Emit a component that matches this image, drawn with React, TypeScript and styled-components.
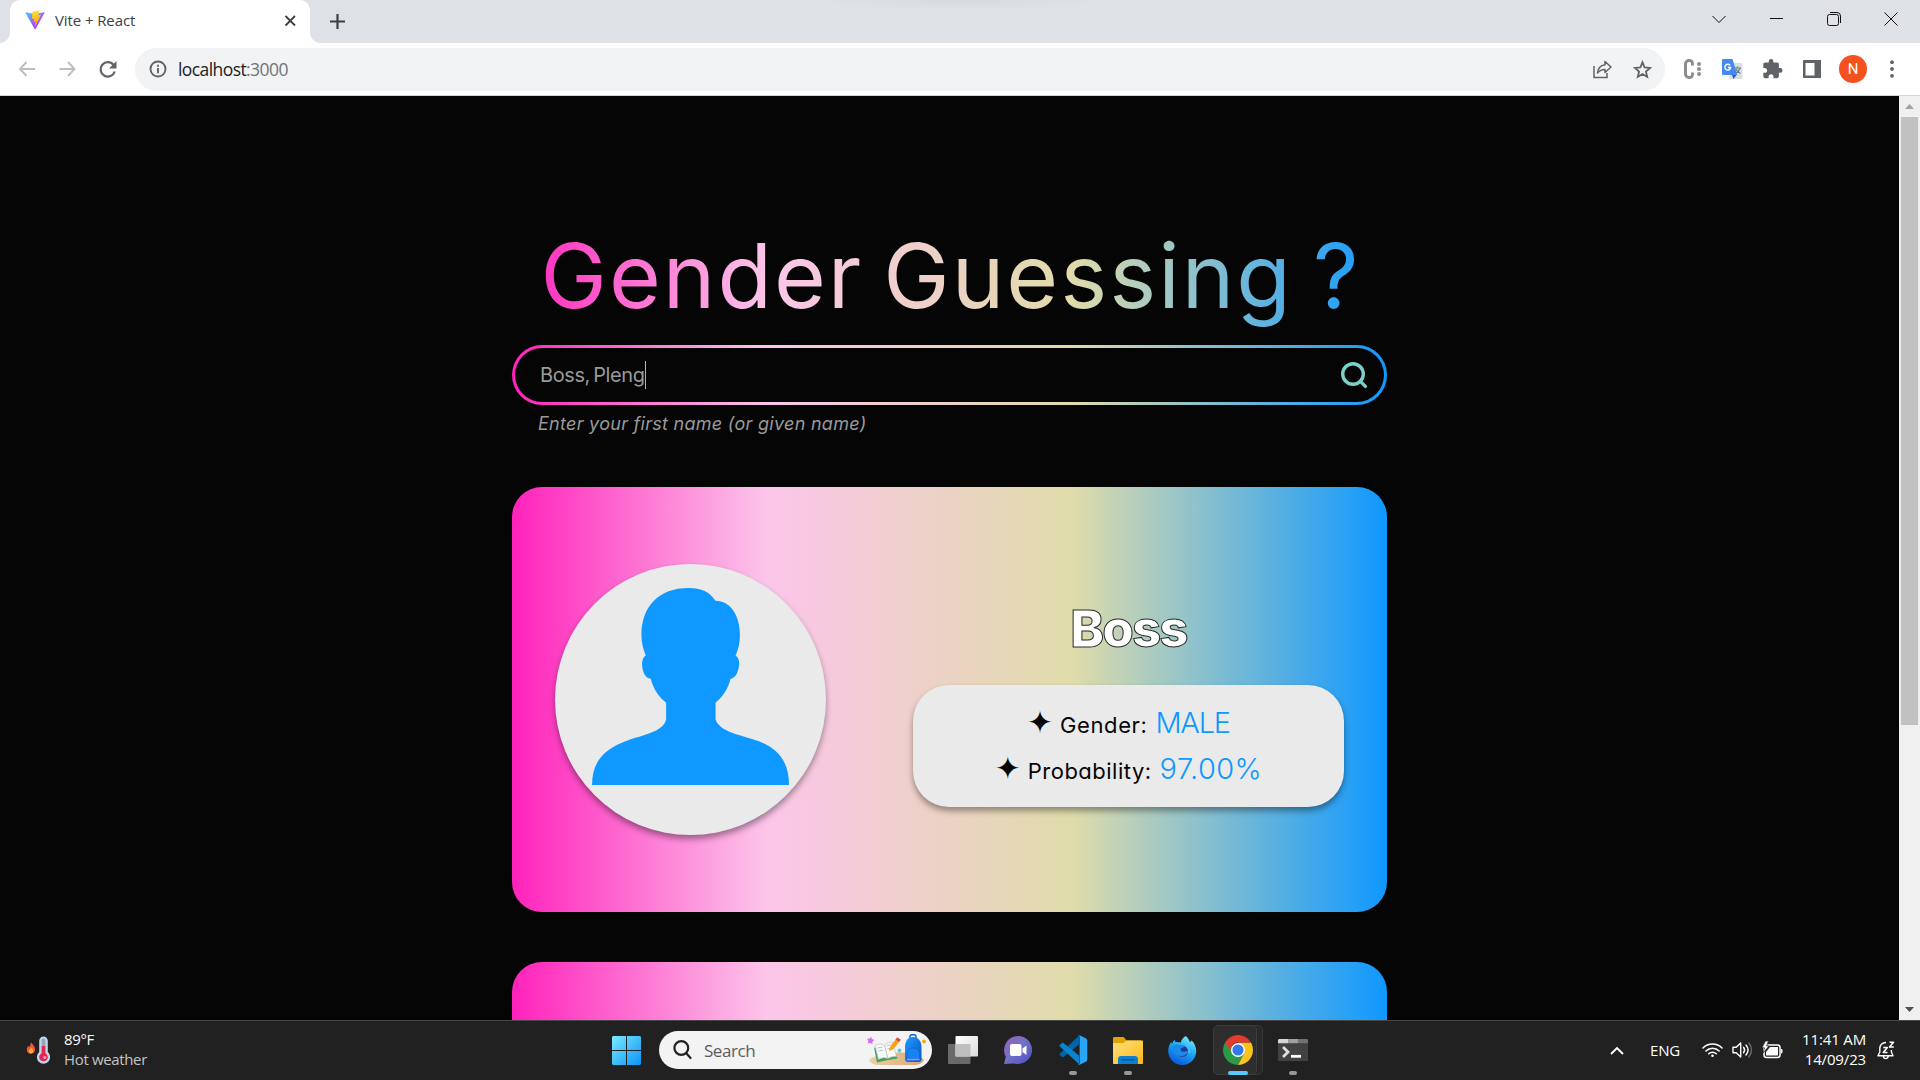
import React from "react";
import styled, { createGlobalStyle } from "styled-components";

const UI_FONT = '"Open Sans", "Noto Sans", sans-serif';
const PAGE_FONT = 'Inter, "Liberation Sans", sans-serif';
const RAINBOW = "linear-gradient(90deg, #ff22bb 0%, #fcc5ea 29%, #e0dcaa 64%, #0f98ff 100%)";

const GlobalStyle = createGlobalStyle`
  *, *::before, *::after { box-sizing: border-box; }
  body { margin: 0; background: #050505; overflow: hidden; }
  svg { display: block; flex: none; }
  h1, h2, p { margin: 0; }
`;

/* ---------- browser window ---------- */

const Screen = styled.div`
  width: 1920px;
  height: 1080px;
  display: flex;
  flex-direction: column;
  font-family: ${UI_FONT};
  overflow: hidden;
`;

const TabStrip = styled.header`
  height: 43px;
  flex: none;
  display: flex;
  background: radial-gradient(ellipse 150px 10px at 960px 0, #d6dade 0%, #dee1e6 100%);
`;

const Tab = styled.div`
  position: relative;
  width: 300px;
  height: 43px;
  margin-left: 10px;
  padding: 0 13px 3px 15px;
  display: flex;
  align-items: center;
  background: #fff;
  border-radius: 10px 10px 0 0;

  &::before, &::after {
    content: "";
    position: absolute;
    bottom: 0;
    width: 10px;
    height: 10px;
  }
  &::before {
    left: -10px;
    background: radial-gradient(circle at 0 0, transparent 9.5px, #fff 10px);
  }
  &::after {
    right: -10px;
    background: radial-gradient(circle at 100% 0, transparent 9.5px, #fff 10px);
  }
`;

const TabTitle = styled.span`
  margin-left: 10px;
  flex: 1;
  font-size: 15px;
  line-height: 20px;
  letter-spacing: -0.1px;
  color: #3c4043;
`;

const NewTab = styled.div`
  width: 54px;
  display: flex;
  align-items: center;
  justify-content: center;
  padding-bottom: 1px;
`;

const WindowControls = styled.div`
  margin-left: auto;
  display: flex;
  height: 37px;
`;

const ControlCell = styled.div`
  width: 57.4px;
  display: flex;
  align-items: center;
  justify-content: center;
`;

const Toolbar = styled.div`
  height: 53px;
  flex: none;
  display: flex;
  align-items: center;
  padding: 0 8px 0 7px;
  background: #fff;
  border-bottom: 1px solid #d5d7da;
`;

const ToolCell = styled.div`
  width: 40px;
  height: 40px;
  display: flex;
  flex: none;
  align-items: center;
  justify-content: center;
`;

const Omnibox = styled.div`
  flex: 1;
  height: 43px;
  margin: 0 7px 0 8px;
  padding: 0 3px 0 14px;
  display: flex;
  align-items: center;
  border-radius: 22px;
  background: #f1f3f4;
`;

const Url = styled.span`
  flex: 1;
  margin-left: 11px;
  font-size: 17.5px;
  line-height: 24px;
  letter-spacing: -0.58px;
  color: #202124;
`;

const Port = styled.span`
  color: #70757a;
`;

const Profile = styled.div`
  width: 28px;
  height: 28px;
  margin-left: 2px;
  border-radius: 50%;
  display: flex;
  align-items: center;
  justify-content: center;
  background: #f4511e;
  color: #fff;
  font: 400 15px/28px Roboto, sans-serif;
`;

/* ---------- web page ---------- */

const Viewport = styled.div`
  height: 924px;
  flex: none;
  display: flex;
  background: #050505;
  overflow: hidden;
`;

const Page = styled.main`
  flex: 1;
  display: flex;
  flex-direction: column;
  align-items: center;
  padding-top: 120px;
  font-family: ${PAGE_FONT};
  font-feature-settings: "cv11";
`;

const Column = styled.div`
  width: 875px;
  display: flex;
  flex-direction: column;
  flex: none;
`;

const Title = styled.h1`
  height: 120px;
  text-align: center;
  font-size: 89px;
  font-weight: 400;
  line-height: 120px;
  letter-spacing: 2px;
  word-spacing: -7px;
  text-indent: 2px;
  white-space: nowrap;
  background: ${RAINBOW};
  background-clip: text;
  -webkit-background-clip: text;
  color: transparent;
`;

const SearchField = styled.div`
  height: 60px;
  margin-top: 9px;
  padding: 0 16px 0 25px;
  display: flex;
  align-items: center;
  border: 3px solid transparent;
  border-radius: 30px;
  background: linear-gradient(#050505, #050505) padding-box, ${RAINBOW} border-box;
`;

const Query = styled.span`
  font-size: 20px;
  line-height: 28px;
  letter-spacing: -0.4px;
  word-spacing: -2px;
  color: #9a9a9a;
`;

const Caret = styled.span`
  width: 1px;
  height: 28px;
  margin-right: auto;
  background: #b5b5b5;
`;

const Hint = styled.p`
  margin: 5px 0 0 26px;
  height: 27px;
  font-size: 18px;
  font-style: italic;
  line-height: 27px;
  letter-spacing: 0.28px;
  color: #9a9a9a;
`;

const Card = styled.section`
  height: 425px;
  flex: none;
  margin-top: 50px;
  padding: 0 43px;
  display: flex;
  align-items: center;
  justify-content: space-between;
  border-radius: 30px;
  background: ${RAINBOW};
`;

const Avatar = styled.div`
  width: 271px;
  height: 271px;
  padding-top: 24px;
  display: flex;
  justify-content: center;
  border-radius: 50%;
  background: #eaeaea;
  box-shadow: 0 4px 6px rgba(0, 0, 0, 0.38);
`;

const Details = styled.div`
  width: 431px;
  display: flex;
  flex-direction: column;
`;

const Name = styled.h2`
  height: 75px;
  text-align: center;
  font-size: 51px;
  font-weight: 800;
  line-height: 74px;
  letter-spacing: -1.9px;
  color: #fff;
  -webkit-text-stroke: 1px #2b2b2b;
`;

const Facts = styled.div`
  height: 122px;
  margin-top: 18px;
  padding-top: 15px;
  border-radius: 36px;
  background: #eaeaea;
  box-shadow: 0 4px 6px rgba(0, 0, 0, 0.38);
`;

const Fact = styled.div`
  height: 46px;
  display: flex;
  align-items: baseline;
  justify-content: center;
  line-height: 46px;
`;

const Spark = styled.span`
  font-family: "DejaVu Sans", sans-serif;
  font-size: 31px;
  line-height: 30px;
  color: #050505;
`;

const Label = styled.span<{ $track: number }>`
  margin-left: 7px;
  font-size: 22px;
  font-weight: 400;
  letter-spacing: ${(p) => p.$track}px;
  color: #050505;
`;

const Value = styled.span<{ $track: number }>`
  margin-left: 8px;
  font-size: 29px;
  font-weight: 330;
  letter-spacing: ${(p) => p.$track}px;
  color: #0f98ff;
`;

const Scrollbar = styled.aside`
  width: 21px;
  flex: none;
  display: flex;
  flex-direction: column;
  align-items: center;
  background: #f0f0f0;
`;

const ScrollButton = styled.div`
  width: 21px;
  height: 21px;
  display: flex;
  align-items: center;
  justify-content: center;
`;

const ScrollThumb = styled.div`
  width: 17px;
  height: 608px;
  margin-bottom: auto;
  background: #c1c1c1;
`;

/* ---------- taskbar ---------- */

const Taskbar = styled.footer`
  height: 60px;
  flex: none;
  display: flex;
  align-items: center;
  padding: 0 25px 1px 0;
  background: #202120;
  border-top: 1px solid #474747;
  color: #fff;
`;

const Weather = styled.div`
  width: 599px;
  padding-left: 26px;
  display: flex;
  align-items: center;
`;

const WeatherText = styled.div`
  margin: -2px 0 0 14px;
  display: flex;
  flex-direction: column;
  font-size: 15px;
  line-height: 20px;
  letter-spacing: -0.35px;
`;

const Muted = styled.span`
  color: #c4c4c4;
`;

const TaskCell = styled.div`
  position: relative;
  width: 55px;
  height: 59px;
  display: flex;
  flex: none;
  align-items: center;
  justify-content: center;
`;

const Running = styled.span<{ $active?: boolean }>`
  position: absolute;
  bottom: 5px;
  left: 50%;
  width: ${(p) => (p.$active ? 20 : 8)}px;
  height: 4px;
  border-radius: 2px;
  transform: translateX(-50%);
  background: ${(p) => (p.$active ? "#5ac8fa" : "#979797")};
`;

const ActiveTile = styled.div`
  width: 44px;
  height: 50px;
  margin-right: 5px;
  padding-left: 5px;
  display: flex;
  align-items: center;
  justify-content: center;
  border: 1px solid #3c3c3c;
  border-radius: 5px;
  background: #2e2e2e;
  box-shadow: 6px 0 0 -1px #292929, 6px 0 0 0 #383838;
`;

const TaskSearch = styled.div`
  width: 273px;
  height: 38px;
  margin: 0 3px 0 5px;
  padding: 0 5px 0 14px;
  display: flex;
  align-items: center;
  border-radius: 19px;
  background: #f3f3f3;
`;

const SearchText = styled.span`
  flex: 1;
  margin: 1px 0 0 12px;
  font-size: 17px;
  line-height: 24px;
  letter-spacing: -0.45px;
  color: #5c5c5c;
`;

const Tray = styled.div`
  margin-left: auto;
  display: flex;
  align-items: center;
`;

const Language = styled.span`
  margin: 0 22px 0 26px;
  font-size: 15px;
  line-height: 20px;
  letter-spacing: -0.2px;
`;

const TrayIcons = styled.div`
  display: flex;
  align-items: center;
  gap: 9px;
`;

const Clock = styled.div`
  width: 84px;
  margin: -2px 11px 0 -1px;
  display: flex;
  flex-direction: column;
  align-items: flex-end;
  font-size: 15px;
  line-height: 20px;
  letter-spacing: -0.15px;
`;

/* ---------- drawings ---------- */

const ViteLogo = () => (
  <svg width="20" height="20" viewBox="0 0 410 404">
    <defs>
      <linearGradient id="viteA" x1="6" y1="33" x2="235" y2="344" gradientUnits="userSpaceOnUse">
        <stop stopColor="#41D1FF" />
        <stop offset="1" stopColor="#BD34FE" />
      </linearGradient>
      <linearGradient id="viteB" x1="194" y1="9" x2="236" y2="293" gradientUnits="userSpaceOnUse">
        <stop stopColor="#FFEA83" />
        <stop offset=".08" stopColor="#FFDD35" />
        <stop offset="1" stopColor="#FFA800" />
      </linearGradient>
    </defs>
    <path fill="url(#viteA)" d="M399.6 59.5 215.6 388.6c-3.8 6.8-13.5 6.8-17.4.1L10.6 59.6C6.4 52.2 12.7 43.3 21 44.8l184.2 32.9c1.2.2 2.4.2 3.5 0l180.3-32.9c8.3-1.5 14.7 7.3 10.6 14.7z" />
    <path fill="url(#viteB)" d="M293 1.6 156.8 28.2a5 5 0 0 0-4 4.6l-8.4 141.5a5 5 0 0 0 6.1 5.2l37.9-8.8a5 5 0 0 1 6 5.9l-11.3 55.1a5 5 0 0 0 6.3 5.8l23.4-7.1a5 5 0 0 1 6.4 5.8l-17.9 86.6c-1.1 5.4 6.1 8.4 9.1 3.7l2-3.1 110.9-221.3a5 5 0 0 0-5.4-7.2l-39 7.5a5 5 0 0 1-5.8-6.3l25.5-88.2A5 5 0 0 0 293 1.6z" />
  </svg>
);

const Arrow = ({ flip }: { flip?: boolean }) => (
  <svg width="18" height="18" viewBox="0 0 18 18" fill="none" stroke="#bcbec0" strokeWidth="1.9">
    {flip ? <path d="M1.5 9h15M10 2l6.5 7L10 16" /> : <path d="M17 9H2M8.5 2 2 9l6.5 7" />}
  </svg>
);

const Reload = () => (
  <svg width="19" height="19" viewBox="-.5 0 19 19">
    <path d="M15 5A7.2 7.2 0 1 0 16.2 11.5" fill="none" stroke="#5f6368" strokeWidth="2.2" />
    <path d="M18 1v7.5h-7.5z" fill="#5f6368" />
  </svg>
);

const InfoIcon = () => (
  <svg width="18" height="18" viewBox="0 0 18 18" fill="none" stroke="#5f6368" strokeWidth="1.9">
    <circle cx="9" cy="9" r="7.5" />
    <path d="M9 8v5.2M9 4.8v2" />
  </svg>
);

const ShareIcon = () => (
  <svg width="20" height="19" viewBox="0 0 20 19" fill="none" stroke="#5f6368" strokeWidth="1.5">
    <path d="M2 6v11.5h13V13" />
    <path d="M13 1.500 19 7l-6 5.500V9.400C9.500 9.400 7.500 10.500 5.500 13c.5-4.500 3-7.600 7.500-8.200z" strokeLinejoin="round" />
  </svg>
);

const StarIcon = () => (
  <svg width="19" height="19" viewBox="0 0 19 19" fill="none" stroke="#5f6368" strokeWidth="1.8">
    <path d="m9.5 2.300 2.100 5.100 5.500.5-4.200 3.600 1.300 5.400-4.700-2.900-4.700 2.900 1.300-5.400-4.200-3.600 5.500-.5z" />
  </svg>
);

const CExtension = () => (
  <svg width="19" height="20" viewBox="0 0 19 20" fill="none" stroke="#8e8e8e">
    <path d="M9.5 6.500V4.500a3 3 0 0 0-3-3h-.5a3.500 3.500 0 0 0-3.500 3.500v10A3.500 3.500 0 0 0 6 18.500h.5a3 3 0 0 0 3-3v-2" strokeWidth="3" />
    <path d="M16 5h.01M16 10h.01M16 15h.01" strokeWidth="4" strokeLinecap="round" />
  </svg>
);

const TranslateIcon = () => (
  <svg width="21" height="21" viewBox="0.5 0.5 21 21">
    <rect x="8" y="4.5" width="13" height="16" rx="1" fill="#dcdfe2" />
    <path d="M10.5 16.500H15l-3 4z" fill="#2f55c9" />
    <path d="M1.5.5H11l4.800 16H1.500a1 1 0 0 1-1-1v-14a1 1 0 0 1 1-1z" fill="#4688f1" />
    <path d="M13 9.500h6.500M16 8v1.500M18.500 9.500c-.8 3-2.500 4.500-4.500 5.500M14.500 10.500c.8 2 2.200 3.500 4.500 4.500" stroke="#5f7f88" strokeWidth="1.2" fill="none" />
    <path d="M8.600 6.900A2.900 2.900 0 1 0 9.200 9H6.500" stroke="#fff" strokeWidth="1.4" fill="none" />
  </svg>
);

const PuzzleIcon = () => (
  <svg width="22" height="22" viewBox="-0.5 0 24 24" fill="#5f6368">
    <path d="M20.500 11H19V7c0-1.100-.9-2-2-2h-4V3.500a2.500 2.500 0 0 0-5 0V5H4c-1.100 0-1.990.9-1.990 2v3.800H3.500c1.490 0 2.700 1.210 2.700 2.700s-1.210 2.700-2.700 2.700H2V20c0 1.100.9 2 2 2h3.800v-1.500c0-1.490 1.210-2.700 2.700-2.700 1.490 0 2.700 1.210 2.700 2.700V22H17c1.100 0 2-.9 2-2v-4h1.500a2.500 2.500 0 0 0 0-5z" />
  </svg>
);

const PanelIcon = () => (
  <svg width="18" height="18" viewBox="0 0 18 18">
    <path fill="#5f6368" fillRule="evenodd" d="M0 0h18v18H0zM2.500 3v12.500H11.500V3z" />
  </svg>
);

const MenuDots = () => (
  <svg width="4" height="18" viewBox="0 0 4 18" fill="#5f6368">
    <circle cx="2" cy="2.2" r="1.9" />
    <circle cx="2" cy="9" r="1.9" />
    <circle cx="2" cy="15.8" r="1.9" />
  </svg>
);

const Magnifier = () => (
  <svg width="28" height="28" viewBox="0 0 28 28" fill="none" stroke="#7bd0cb" strokeWidth="3.4" strokeLinecap="round">
    <circle cx="13" cy="13" r="10.3" />
    <path d="m20.600 20.600 4.800 4.800" />
  </svg>
);

const Person = () => (
  <svg width="197" height="197" viewBox="276 324 590 590" fill="#0f98ff">
    <path d="M276 914C277 850 303 808 390 778C440 762 490 752 498 718L498 668C478 652 458 625 452 596C432 594 425 565 426 548C427 535 432 529 437 526C430 510 424 490 424 465C424 380 475 324 565 324C605 324 628 336 646 362C690 362 719 405 719 465C719 490 714 510 706 526C712 530 717 538 717 550C716 570 708 594 691 596C685 625 665 652 646 668L646 718C658 750 700 760 755 776C830 798 866 840 866 914Z" />
  </svg>
);

const Thermometer = () => (
  <svg width="24" height="29" viewBox="0 0 24 29">
    <path d="M5 6.500c3 3 4.500 5 4 7.800C8.500 17 6.800 17.800 4.800 17.800 2.200 17.800.8 16 .8 13.800c0-2 .8-3 1.500-4 .5.8.8 1 1.200 1.200C4.200 9.500 4.300 8 5 6.500z" fill="#f0553a" />
    <path d="M5.200 11.500c1.500 1.500 2.200 2.800 2 4C7 16.800 6 17.300 5 17.300s-2.200-.8-2.200-2.300c0-1.300 1.800-2 2.400-3.500z" fill="#ffb02e" />
    <path d="M17.500.5a4.300 4.300 0 0 1 4.300 4.300v11.300a6.600 6.600 0 1 1-8.600 0V4.800A4.300 4.300 0 0 1 17.500.5z" fill="#b9d8f0" />
    <path d="M15.600 4.500a1.900 1.900 0 0 1 3.800 0v6h-3.800z" fill="#9aa6b5" />
    <path d="M15.600 10h3.800v7.200a4.300 4.300 0 1 1-3.800 0z" fill="#e5274f" />
    <circle cx="18.8" cy="21.5" r="1.5" fill="#f59ab0" />
  </svg>
);

const WindowsLogo = () => (
  <svg width="29" height="29" viewBox="0 0 29 29">
    <defs>
      <linearGradient id="win" x1="0" y1="0" x2="1" y2="1">
        <stop stopColor="#7cebff" />
        <stop offset="1" stopColor="#0a93f5" />
      </linearGradient>
    </defs>
    <path fill="url(#win)" d="M1 0h13v14H0V1zM15 0h13l1 1v13H15zM0 15h14v14H1l-1-1zM15 15h14v13l-1 1H15z" />
  </svg>
);

const SearchGlyph = () => (
  <svg width="19" height="20" viewBox="0 0 19 20" fill="none" stroke="#222" strokeWidth="2.2" strokeLinecap="round">
    <circle cx="8.3" cy="8" r="6.9" />
    <path d="m13.500 13.500 4 4.500" />
  </svg>
);

const SchoolArt = () => (
  <svg width="60" height="32" viewBox="0 0 60 32">
    <defs>
      <linearGradient id="desk" x1="0" y1="0" x2="1" y2="0">
        <stop stopColor="#f0cfa5" />
        <stop offset="1" stopColor="#d9a874" />
      </linearGradient>
      <linearGradient id="bag" x1="0" y1="0" x2="1" y2="1">
        <stop stopColor="#1f9bff" />
        <stop offset="1" stopColor="#0758c9" />
      </linearGradient>
    </defs>
    <path d="M2 25.500C8 21 22 18.500 34 18.500S53 21 57 26c-2 4-6 5-10 5H12c-5 0-9-2-10-5.500z" fill="url(#desk)" />
    <path d="m4 2.500.9 2.400L7.500 6 5.300 7.500l.2 2.800-2.200-1.600L.8 9.500l.7-2.600L0 4.600l2.800.1z" fill="#d26bf3" />
    <path d="m7 13.500 3 15 11-2.500 9.500-1.500-1-3.500z" fill="#3ea45a" />
    <path d="M8 11.500c4-2.500 7-1.500 9.500 0 2-2.500 5-3.500 8-3.500l4 14.500c-4 0-6.500.5-8.500 2-3-1.500-7-.8-9.500 1z" fill="#fafafa" stroke="#b9bec6" strokeWidth=".7" />
    <path d="m17.500 11.500 3.500 13M10.500 14l5-1M11.500 17l5-1M19.500 12l5-1.500M20.500 15l5-1.500" stroke="#aab0ba" strokeWidth=".8" fill="none" />
    <path d="m22 17 1-4 6-8 3.500 2.500-6.500 8z" fill="#f7a11a" />
    <path d="m28.500 5.500 1.800-2.300 3.500 2.500L32 8z" fill="#e64545" />
    <circle cx="32.5" cy="16.5" r="2" fill="#55cfe0" />
    <circle cx="57" cy="7.5" r="1.9" fill="#f9a60a" />
    <path d="M43 4.500V2.800c0-1.200.8-2 2-2h2c1.200 0 2 .8 2 2v1.700" stroke="#0b5fca" strokeWidth="1.4" fill="none" />
    <path d="M38 13c0-6 3-10 8-10s8.500 4 8.500 10v12c0 2-1 3-3 3H41c-2 0-3-1-3-3z" fill="url(#bag)" />
    <path d="M40 20c0-4 2.500-6 6-6s6.500 2 6.500 6v5H40z" fill="#1683f2" stroke="#0a63cf" strokeWidth=".7" />
    <path d="M40 25.500h12.500" stroke="#c37cf4" strokeWidth="1.5" />
  </svg>
);

const TaskView = () => (
  <svg width="30" height="28" viewBox="0 0 30 28">
    <defs>
      <linearGradient id="tvw" x1="0" y1="0" x2="1" y2="1">
        <stop stopColor="#fff" />
        <stop offset="1" stopColor="#dcdcdc" />
      </linearGradient>
    </defs>
    <rect x="0" y="8" width="22.5" height="20" rx="1" fill="#6a6a6a" />
    <rect x="7.5" y="0" width="22.5" height="20.5" rx="1" fill="url(#tvw)" />
    <rect x="7.5" y="8" width="15" height="12.5" fill="#bfbfbf" />
  </svg>
);

const ChatIcon = () => (
  <svg width="28" height="28" viewBox="0 0 28 28">
    <defs>
      <linearGradient id="chat" x1="0" y1="0" x2="1" y2="1">
        <stop stopColor="#9a62b4" />
        <stop offset=".45" stopColor="#7272c9" />
        <stop offset="1" stopColor="#4c50c4" />
      </linearGradient>
    </defs>
    <path d="M14 0a14 14 0 1 1-4 27.400L0 28l1.800-7.200A14 14 0 0 1 14 0z" fill="url(#chat)" />
    <rect x="6" y="8" width="11.5" height="12" rx="2" fill="#fff" />
    <path d="m18.500 12.500 4-3v9.500l-4-3z" fill="#fff" />
  </svg>
);

const CodeIcon = () => (
  <svg width="30" height="30" viewBox="0.5 0 30 30">
    <path d="m21.500.8-19 17.700c-.6.500-.6 1.200 0 1.700l1.800 1.600c.5.500 1.200.5 1.700.1L21.500 9.500z" fill="#0065a9" />
    <path d="m21.500 29.200-19-17.600c-.6-.6-.6-1.300 0-1.800L4.300 8.200c.5-.5 1.200-.5 1.700-.1L21.500 20.500z" fill="#0a84cf" />
    <path d="M21.500 29.700c-.6-.1-1.100-.3-1.600-.8 1 .9 2.200.4 2.200-.8V1.900c0-1.200-1.300-1.800-2.200-.9.500-.5 1-.7 1.600-.7.400 0 .8.100 1.200.2l5.500 2.700c1 .5 1.600 1.500 1.600 2.600v18.400c0 1.100-.6 2.100-1.600 2.600l-5.500 2.700c-.4.200-.8.200-1.200.2z" fill="#2aa4f4" />
  </svg>
);

const FolderIcon = () => (
  <svg width="30" height="27" viewBox="0 0 30 27">
    <defs>
      <linearGradient id="fold" x1="0" y1="0" x2="1" y2="1">
        <stop stopColor="#ffe07a" />
        <stop offset="1" stopColor="#fbb91a" />
      </linearGradient>
    </defs>
    <path d="M0 1.500C0 .5.500 0 1.500 0h8c1 0 1.500.4 2 1l2 2.500H28V9H0z" fill="#e2a300" />
    <path d="M0 6h10.500l3-2.500H29c.6 0 1 .4 1 1V26c0 .6-.4 1-1 1H1c-.6 0-1-.4-1-1z" fill="url(#fold)" />
    <path d="M5 27v-5c0-1.700 1.300-3 3-3h14c1.700 0 3 1.300 3 3v5z" fill="#0d7fd0" />
    <path d="M8.500 22.800h13" stroke="#0a4f8c" strokeWidth="1.2" />
  </svg>
);

const FirefoxIcon = () => (
  <svg width="29" height="29" viewBox="0.3 0 29 29">
    <defs>
      <linearGradient id="fox" x1=".8" y1="0" x2=".3" y2="1">
        <stop stopColor="#7df0ff" />
        <stop offset=".45" stopColor="#1fa8f4" />
        <stop offset="1" stopColor="#0a55d8" />
      </linearGradient>
    </defs>
    <path d="M18 0c2 1.500 3.500 4 4.200 6 .8-.2 1.300-.8 1.800-1.600 3 3 4.500 6.500 4.500 10.600a14 14 0 0 1-28 0C.5 11.500 1.500 8.500 3.500 6c.2.800.5 1.200 1 1.500C5 5.800 6 4.500 7.200 3.800c0 1 .3 1.800.8 2.400 1.600-.3 3.600 0 5 .5C13.300 4 15.500 1.600 18 0z" fill="url(#fox)" />
    <circle cx="14.8" cy="15.2" r="5.6" fill="#26359c" />
    <path d="M5 10.500c2-2.500 6-2.500 8.500-1.500l3.500 1c-.5 1.200-2 1.700-3.500 2-1.500 1.800.5 4.200 3 3.700 1.600-.4 2.700-.9 4-.5-1 3.300-4.500 5.300-8 4.700-4.500-.8-8-5-7.500-9.400z" fill="#1b8be8" />
    <path d="M17.500 9c3 1.500 4.500 4.500 4 8" stroke="#37c3fa" strokeWidth="2" fill="none" />
  </svg>
);

const ChromeIcon = () => (
  <svg width="30" height="30" viewBox="0 0 30 30">
    <path d="M2.010 7.500A15 15 0 0 0 15 30l6.060-11.500L15 15z" fill="#2a9a48" />
    <path d="M27.990 7.500A15 15 0 0 1 15 30l6.060-11.500L15 15V7.500z" fill="#fcc31c" />
    <path d="M2.010 7.500A15 15 0 0 1 27.990 7.500H15a7.500 7.500 0 0 0-6.900 5L7 16z" fill="#e33b2e" />
    <path d="M2.010 7.500 8.500 18.750 9 20 5 22z" fill="#2a9a48" />
    <circle cx="15" cy="15" r="7" fill="#fff" />
    <circle cx="15" cy="15" r="5.6" fill="#3079ea" />
  </svg>
);

const TerminalIcon = () => (
  <svg width="30" height="22" viewBox="0 0 30 22">
    <rect width="30" height="22" rx="1" fill="#424242" />
    <path d="M1 0h9.500v4.200H0V1z" fill="#d6d6d6" />
    <path d="M10.500 0H20v4.200h-9.500z" fill="#a0a0a0" />
    <path d="M20 0h9l1 1v3.200H20z" fill="#737373" />
    <path d="m5 8 5 5-5 5" fill="none" stroke="#dedede" strokeWidth="2.8" />
    <path d="M13 17.300h10" stroke="#fff" strokeWidth="2.8" />
  </svg>
);

const WifiIcon = () => (
  <svg width="21" height="16" viewBox="0 0 21 16" fill="none" stroke="#fff" strokeWidth="1.5" strokeLinecap="round">
    <path d="M1 6a13.300 13.300 0 0 1 19 0M3.900 9a9.200 9.200 0 0 1 13.200 0M6.700 11.800a5.300 5.300 0 0 1 7.600 0" />
    <circle cx="10.5" cy="13.8" r="1.3" fill="#fff" stroke="none" />
  </svg>
);

const SpeakerIcon = () => (
  <svg width="21" height="18" viewBox="0 0 21 18" fill="none" stroke="#fff" strokeWidth="1.4" strokeLinecap="round" strokeLinejoin="round">
    <path d="M1 6.300h3.200L8.700 2v14l-4.500-4.300H1z" />
    <path d="M11.500 6.300c1.300 1.600 1.300 3.800 0 5.400M14 4c2.500 3 2.500 7 0 10" />
    <path d="M16.800 2c3.600 4.200 3.600 9.800 0 14" stroke="#6a6a6a" />
  </svg>
);

const BatteryIcon = () => (
  <svg width="21" height="18" viewBox="0 0 21 18">
    <rect x="2" y="4" width="16" height="12.5" rx="2.5" fill="none" stroke="#fff" strokeWidth="1.5" />
    <path d="M4 14.500V11l4-5h8v8.500z" fill="#fff" />
    <path d="M19 8v4.500c1 0 1.500-.6 1.500-1.300V9.300c0-.7-.5-1.300-1.500-1.300z" fill="#fff" />
    <path d="M3.500 0 0 6.800h2.500L1 12l6-7H4.500L6.500 0z" fill="#fff" stroke="#202120" strokeWidth=".7" />
  </svg>
);

const BellIcon = () => (
  <svg width="18" height="19" viewBox="0 0 18 19" fill="none" stroke="#fff" strokeWidth="1.4" strokeLinejoin="round">
    <path d="M9 1.500C5 1.500 2.800 4.200 2.800 7.500V11L1 14.800h15L14.400 11V9M6.200 15c.3 1.800 1.300 2.600 2.500 2.600S11 16.800 11.300 15" />
    <path d="M6.300 6.500h4l-4 5h4.200M12.500 1.300h4l-4 4.700h4.300" strokeWidth="1.6" />
  </svg>
);

const WindowGlyph = ({ d, size }: { d: string; size: number }) => (
  <svg width={size} height={size} viewBox={`0 0 ${size} ${size}`} fill="none" stroke="#111" strokeWidth="1">
    <path d={d} />
  </svg>
);

const Triangle = ({ down }: { down?: boolean }) => (
  <svg width="9" height="5" viewBox="0 0 9 5" fill={down ? "#505050" : "#a3a3a3"}>
    <path d={down ? "M0 0h9L4.500 5z" : "M0 5h9L4.500 0z"} />
  </svg>
);

/* ---------- composition ---------- */

const facts = [
  { label: "Gender:", value: "MALE", labelTrack: 0.6, valueTrack: -1.2 },
  { label: "Probability:", value: "97.00%", labelTrack: 0.5, valueTrack: 0.45 },
];

export default function App() {
  return (
    <Screen>
      <GlobalStyle />
      <TabStrip>
        <Tab>
          <ViteLogo />
          <TabTitle>Vite + React</TabTitle>
          <svg width="14" height="14" viewBox="0 0 14 14" stroke="#3c4043" strokeWidth="1.8">
            <path d="m2.500 3 9.500 9.500M12 3 2.500 12.500" />
          </svg>
        </Tab>
        <NewTab>
          <svg width="15" height="15" viewBox="0 0 15 15" stroke="#3c4043" strokeWidth="2.2">
            <path d="M7.500 0v15M0 7.500h15" />
          </svg>
        </NewTab>
        <WindowControls>
          <ControlCell><WindowGlyph size={14} d="M.5 4 7 10.500 13.500 4" /></ControlCell>
          <ControlCell><WindowGlyph size={13} d="M0 6.500h13" /></ControlCell>
          <ControlCell>
            <WindowGlyph size={14} d="M2.500 2.500h7q2 0 2 2v7q0 2-2 2h-7q-2 0-2-2v-7q0-2 2-2zM3 .5h7q3.500 0 3.500 3.500v7" />
          </ControlCell>
          <ControlCell><WindowGlyph size={14} d="m.5.5 13 13M13.500.5l-13 13" /></ControlCell>
        </WindowControls>
      </TabStrip>

      <Toolbar>
        <ToolCell><Arrow /></ToolCell>
        <ToolCell><Arrow flip /></ToolCell>
        <ToolCell><Reload /></ToolCell>
        <Omnibox>
          <InfoIcon />
          <Url>localhost<Port>:3000</Port></Url>
          <ToolCell><ShareIcon /></ToolCell>
          <ToolCell><StarIcon /></ToolCell>
        </Omnibox>
        <ToolCell><CExtension /></ToolCell>
        <ToolCell><TranslateIcon /></ToolCell>
        <ToolCell><PuzzleIcon /></ToolCell>
        <ToolCell><PanelIcon /></ToolCell>
        <ToolCell><Profile>N</Profile></ToolCell>
        <ToolCell><MenuDots /></ToolCell>
      </Toolbar>

      <Viewport>
        <Page>
          <Column>
            <Title>Gender Guessing ?</Title>
            <SearchField>
              <Query>Boss, Pleng</Query>
              <Caret />
              <Magnifier />
            </SearchField>
            <Hint>Enter your first name (or given name)</Hint>
            <Card>
              <Avatar><Person /></Avatar>
              <Details>
                <Name>Boss</Name>
                <Facts>
                  {facts.map((f) => (
                    <Fact key={f.label}>
                      <Spark>✦</Spark>
                      <Label $track={f.labelTrack}>{f.label}</Label>
                      <Value $track={f.valueTrack}>{f.value}</Value>
                    </Fact>
                  ))}
                </Facts>
              </Details>
            </Card>
            <Card />
          </Column>
        </Page>
        <Scrollbar>
          <ScrollButton><Triangle /></ScrollButton>
          <ScrollThumb />
          <ScrollButton><Triangle down /></ScrollButton>
        </Scrollbar>
      </Viewport>

      <Taskbar>
        <Weather>
          <Thermometer />
          <WeatherText>
            <span>89°F</span>
            <Muted>Hot weather</Muted>
          </WeatherText>
        </Weather>
        <TaskCell><WindowsLogo /></TaskCell>
        <TaskSearch>
          <SearchGlyph />
          <SearchText>Search</SearchText>
          <SchoolArt />
        </TaskSearch>
        <TaskCell><TaskView /></TaskCell>
        <TaskCell><ChatIcon /></TaskCell>
        <TaskCell><CodeIcon /><Running /></TaskCell>
        <TaskCell><FolderIcon /><Running /></TaskCell>
        <TaskCell><FirefoxIcon /></TaskCell>
        <TaskCell><ActiveTile><ChromeIcon /></ActiveTile><Running $active /></TaskCell>
        <TaskCell><TerminalIcon /><Running /></TaskCell>
        <Tray>
          <svg width="14" height="9" viewBox="0 0 14 9" fill="none" stroke="#fff" strokeWidth="1.9">
            <path d="m1 8 6-6 6 6" />
          </svg>
          <Language>ENG</Language>
          <TrayIcons>
            <WifiIcon />
            <SpeakerIcon />
            <BatteryIcon />
          </TrayIcons>
          <Clock>
            <span>11:41 AM</span>
            <span>14/09/23</span>
          </Clock>
          <BellIcon />
        </Tray>
      </Taskbar>
    </Screen>
  );
}
